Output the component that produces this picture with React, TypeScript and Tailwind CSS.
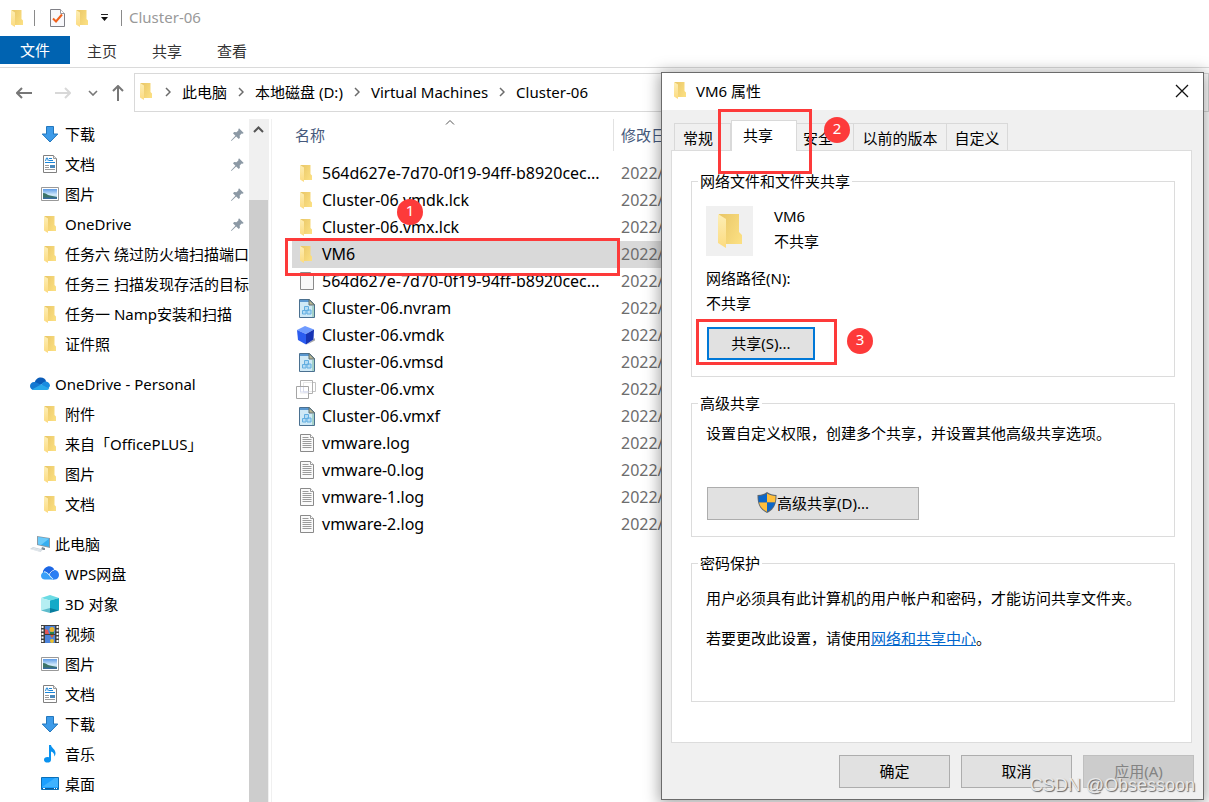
import React, { useId } from "react";

type IconProps = { className?: string };

function FolderIcon({ className = "h-[17px] w-3" }: IconProps) {
  const id = useId();
  return (
    <svg viewBox="0 0 24 34" className={className} aria-hidden="true">
      <defs>
        <linearGradient id={id + "b"} x1="0" y1="0.2" x2="1" y2="0.8">
          <stop offset="0" stopColor="#eac869" />
          <stop offset="1" stopColor="#fbdf82" />
        </linearGradient>
        <linearGradient id={id + "f"} x1="0" y1="0" x2="0" y2="1">
          <stop offset="0" stopColor="#fdeeb5" />
          <stop offset="1" stopColor="#fcdb80" />
        </linearGradient>
      </defs>
      <path d="M1 0h20v18l3 3v9H7L1 4z" fill={`url(#${id}b)`} />
      <path d="M0 0l8 5v29l-8-5z" fill={`url(#${id}f)`} />
    </svg>
  );
}

function DownloadIcon() {
  return (
    <svg viewBox="0 0 18 18" className="h-[18px] w-[18px]" aria-hidden="true">
      <path d="M5.5 1.5h7V9h4.3L9 17 1.2 9h4.3z" fill="#3d9be9" stroke="#2377bd" strokeWidth="1" />
    </svg>
  );
}

function DocumentIcon() {
  return (
    <svg viewBox="0 0 18 18" className="h-[18px] w-[18px]" aria-hidden="true">
      <path d="M2.5.5h10l3 3v14h-13z" fill="#fff" stroke="#808080" />
      <path d="M12.5.5v3h3" fill="#e8e8e8" stroke="#9a9a9a" />
      <path d="M4.5 6l1-3h1l.8 3M8 3.5h3M8 5.5h4M4 7.5h10" fill="none" stroke="#1c86d8" />
      <path d="M4 10.500h4M4 12.500h4M4 14.500h10" stroke="#9a9a9a" />
      <path d="M9 10h5v3H9z" fill="#4a89bd" />
    </svg>
  );
}

function PictureIcon() {
  const id = useId();
  return (
    <svg viewBox="0 0 18 18" className="h-[18px] w-[18px]" aria-hidden="true">
      <defs>
        <linearGradient id={id} x1="0" y1="0" x2="0" y2="1">
          <stop offset="0" stopColor="#5e9be6" />
          <stop offset="0.6" stopColor="#d6ecfb" />
          <stop offset="1" stopColor="#7fb3dc" />
        </linearGradient>
      </defs>
      <path d="M.5 2.500h17v13H.5z" fill="#fff" stroke="#999" />
      <path d="M2 4h14v10H2z" fill={`url(#${id})`} />
      <path d="M2 8c3 0 4 2 7 2.500l7 1.500v1H2z" fill="#3d7568" />
      <path d="M2 12.500h14V14H2z" fill="#386c9f" />
    </svg>
  );
}

function PinIcon() {
  return (
    <svg viewBox="0 0 13 13" className="h-[13px] w-[13px] shrink-0" aria-hidden="true">
      <path
        d="M8 .3L12.700 5l-1.200.7-.8-.2-2 2 .2 2.300-1.100 1.200-2.600-2.600L.7 12.800 0 13l.2-.8 4.200-4.500L2 5.200l1.200-1.100 2.300.2 2-2-.2-.8z"
        fill="#8c99a5"
      />
    </svg>
  );
}

function OneDriveIcon() {
  return (
    <svg viewBox="0 0 20 14" className="h-[14px] w-5" aria-hidden="true">
      <path d="M4.500 6.200C5 2.500 8 .5 10.800.5c2.500 0 4.700 1.500 5.400 4L10 8z" fill="#0a5cb8" />
      <path d="M4 13C1.500 13 0 11.200 0 9c0-2.400 2-4.200 4.500-4 1.600.1 3 1 7 3L6 13z" fill="#1479d2" />
      <path d="M11 8c1-2.200 2.800-3.700 5-3.600C18.500 4.500 20 6.500 20 9l-2 3z" fill="#1a8ce0" />
      <path d="M2 12.500l9-5 8.300 4C18.500 12.700 17.500 13 16 13H4c-.8 0-1.400-.1-2-.5z" fill="#28a8ea" />
    </svg>
  );
}

function ComputerIcon() {
  return (
    <svg viewBox="0 0 20 18" className="h-[18px] w-5" aria-hidden="true">
      <path d="M7 1l13 2v10L7 10z" fill="#8b9aa5" />
      <path d="M8 2l11 1.800v7.900L8 9.300z" fill="#35aef0" />
      <path d="M8 2l11 1.800-8 6.200-3-.7z" fill="#6ccbfa" />
      <path d="M12 12l3 1v2h-4z" fill="#7d8b96" />
      <path d="M3 12l10 2.500L10.500 17 0 14z" fill="#c9d2da" />
      <path d="M2.500 13l9 2.400M1.500 14l9 2.300" stroke="#f4f6f8" strokeWidth=".6" />
    </svg>
  );
}

function WpsCloudIcon() {
  return (
    <svg viewBox="0 0 18 18" className="h-[18px] w-[18px]" aria-hidden="true">
      <path d="M2 7.500c.4-3.500 3-6 6.300-6 2.400 0 4.300 1.300 5 3.500C16 5 18 7.200 18 10c0 2.700-1.800 4.500-4.500 4.500H11z" fill="#2d7ff3" />
      <path d="M2 7.500c.4-3.500 3-6 6.300-6C11 1.500 13 3.500 13.300 5.500L8 10z" fill="#1e67e4" />
      <path d="M4 14.500c-2.400 0-4-1.600-4-3.700C0 8.500 1.800 6.800 4 6.800c3.500 0 4.500 3.700 9.500 7.700z" fill="#3aa0f8" />
      <path d="M3 6.800c4 0 5.500 4.500 9 7.500" fill="none" stroke="#fff" strokeWidth=".9" />
      <path d="M8 10c1.200-2.700 3-4.500 5.300-5" fill="none" stroke="#fff" strokeWidth=".8" />
    </svg>
  );
}

function ObjectsIcon() {
  return (
    <svg viewBox="0 0 18 18" className="h-[18px] w-[18px]" aria-hidden="true">
      <path d="M0 3L9 0l9 3-9 2.500z" fill="#6bdbe4" />
      <path d="M0 3l9 2.500V15l-9 .5z" fill="#b5eef2" />
      <path d="M18 3L9 5.500V15l9 .5z" fill="#14aac8" />
      <path d="M0 15.500L9 13v5z" fill="#5dbccc" />
      <path d="M18 15.500L9 13v5z" fill="#087d9f" />
    </svg>
  );
}

function VideoIcon() {
  return (
    <svg viewBox="0 0 18 18" className="h-[18px] w-[18px]" aria-hidden="true">
      <path d="M0 0h18v18H0z" fill="#3f3f3f" />
      <path d="M1.500 1v17M16.500 1v17" stroke="#fff" strokeWidth="2" strokeDasharray="2 1.500" />
      <path d="M4 1h10v8H4zM4 10h10v8H4z" fill="#4c83da" />
      <path d="M4 4l3 1 1 4H4z" fill="#e35656" />
      <circle cx="11" cy="4.500" r="2.500" fill="#ecb52c" />
      <path d="M9 7h4v2H9z" fill="#2f8145" />
      <path d="M9 10l2 3 2-3z" fill="#cf5f2f" />
      <circle cx="11" cy="16" r="2" fill="#ecc02c" />
    </svg>
  );
}

function MusicIcon() {
  return (
    <svg viewBox="0 0 18 18" className="h-[18px] w-[18px]" aria-hidden="true">
      <ellipse cx="6.500" cy="14.700" rx="3.500" ry="2.800" fill="#0a92ef" />
      <path d="M8 0h2c.3 3 4.500 4 4.500 8 0 1.500-.4 2.500-1.200 3.500.2-2.500-.6-4-3.300-5V15H8z" fill="#0a92ef" />
    </svg>
  );
}

function DesktopIcon() {
  return (
    <svg viewBox="0 0 18 18" className="h-[18px] w-[18px]" aria-hidden="true">
      <path d="M.5 2.500h17v12H.5z" fill="#1a9fff" stroke="#0a6fb8" />
      <path d="M1 12L14 3h3v9z" fill="#3fb2ff" />
      <path d="M1 13.500h16" stroke="#0a5c9c" />
      <path d="M2 13.500h2M13 13.500h1M15 13.500h1" stroke="#fff" />
    </svg>
  );
}

function BlankFileIcon() {
  return (
    <svg viewBox="0 0 18 20" className="h-5 w-[18px]" aria-hidden="true">
      <path d="M3.500.500h10l3 3v14h-13z" fill="#f8f8f8" stroke="#8a8a8a" />
      <path d="M13.500.500v3h3" fill="#fff" stroke="#9a9a9a" />
    </svg>
  );
}

function LogIcon() {
  return (
    <svg viewBox="0 0 18 20" className="h-5 w-[18px]" aria-hidden="true">
      <path d="M3.500.500h10l3 3v14h-13z" fill="#fafafa" stroke="#8a8a8a" />
      <path d="M13.500.500v3h3" fill="#fff" stroke="#9a9a9a" />
      <path d="M5.500 3.500h6M5.500 5.500h9M5.500 7.500h9M5.500 9.500h9M5.500 11.500h9M5.500 13.500h9" stroke="#9b9b9b" />
    </svg>
  );
}

function VmFileIcon() {
  return (
    <svg viewBox="0 0 18 20" className="h-5 w-[18px]" aria-hidden="true">
      <path d="M2.500.500h10l5 5v13h-15z" fill="#cfe9f6" stroke="#4a7090" />
      <path d="M3 1h9v2H3z" fill="#5a97cf" />
      <path d="M15 7h2v11h-2z" fill="#a5d2c8" />
      <path d="M12 .500v5.500h5.500z" fill="#b9b694" stroke="#5d6f70" />
      <path d="M7.500 7.500h4v4h-4zM5.500 11.500h3.500v3.500H5.500zM10 11h4v4h-4z" fill="#b4dcf5" stroke="#62aee0" />
    </svg>
  );
}

function CubeIcon() {
  return (
    <svg viewBox="0 0 18 20" className="h-5 w-[18px]" aria-hidden="true">
      <path d="M10 18.500l8-4V12z" fill="#a5a5a5" />
      <path d="M0 4L8 0l9 3.500-8 4.500z" fill="#6f9bff" />
      <path d="M0 4l9 4v10.500L1 14z" fill="#2b5cf0" />
      <path d="M17 3.500L9 8v10.500l7.500-5z" fill="#1734b4" />
    </svg>
  );
}

function VmxIcon() {
  return (
    <svg viewBox="0 0 20 20" className="h-5 w-5 shrink-0" aria-hidden="true">
      <path d="M7.500 2.500h12v9h-12z" fill="#fff" stroke="#c4c4c4" />
      <path d="M4.500.500h12v13h-12z" fill="#fff" fillOpacity=".6" stroke="#b0b0b0" />
      <path d="M.5 6.500h12v12H.5z" fill="#fff" fillOpacity=".85" stroke="#a5a5a5" />
      <path d="M4.500 7v5h8M7.500 7v5h5" fill="none" stroke="#d8dcee" />
    </svg>
  );
}

function ShieldIcon() {
  return (
    <svg viewBox="0 0 20 21" className="h-[21px] w-5 shrink-0" aria-hidden="true">
      <path d="M10 0C7.500 2 4 3 .5 3 .5 11 2 17 10 21 18 17 19.500 11 19.500 3 16 3 12.500 2 10 0z" fill="#5c6670" />
      <path d="M10 1.500V10.500H2c-.4-2-.5-4-.5-6.500C4.500 4 7.500 3 10 1.500z" fill="#0c67c9" />
      <path d="M10 1.500V10.500h8c.4-2 .5-4 .5-6.500C15.500 4 12.500 3 10 1.500z" fill="#ffbf3b" />
      <path d="M2 10.500h8v9.200c-5-2.500-7.200-5.500-8-9.200z" fill="#ffbf3b" />
      <path d="M18 10.500h-8v9.200c5-2.500 7.200-5.500 8-9.200z" fill="#0c67c9" />
    </svg>
  );
}

function ChevronRight() {
  return (
    <svg viewBox="0 0 6 10" className="h-[10px] w-[6px] shrink-0" aria-hidden="true">
      <path d="M1 1l4 4-4 4" fill="none" stroke="#6b6b6b" strokeWidth="1.500" />
    </svg>
  );
}

type NavItem = { label: string; icon: React.ReactNode; pinned?: boolean };

const quickAccess: NavItem[] = [
  { label: "下载", icon: <DownloadIcon />, pinned: true },
  { label: "文档", icon: <DocumentIcon />, pinned: true },
  { label: "图片", icon: <PictureIcon />, pinned: true },
  { label: "OneDrive", icon: <FolderIcon />, pinned: true },
  { label: "任务六 绕过防火墙扫描端口", icon: <FolderIcon /> },
  { label: "任务三 扫描发现存活的目标", icon: <FolderIcon /> },
  { label: "任务一 Namp安装和扫描", icon: <FolderIcon /> },
  { label: "证件照", icon: <FolderIcon /> },
];

const oneDrive: NavItem[] = [
  { label: "附件", icon: <FolderIcon /> },
  { label: "来自「OfficePLUS」", icon: <FolderIcon /> },
  { label: "图片", icon: <FolderIcon /> },
  { label: "文档", icon: <FolderIcon /> },
];

const computer: NavItem[] = [
  { label: "WPS网盘", icon: <WpsCloudIcon /> },
  { label: "3D 对象", icon: <ObjectsIcon /> },
  { label: "视频", icon: <VideoIcon /> },
  { label: "图片", icon: <PictureIcon /> },
  { label: "文档", icon: <DocumentIcon /> },
  { label: "下载", icon: <DownloadIcon /> },
  { label: "音乐", icon: <MusicIcon /> },
  { label: "桌面", icon: <DesktopIcon /> },
];

const files: { name: string; icon: React.ReactNode; selected?: boolean }[] = [
  { name: "564d627e-7d70-0f19-94ff-b8920cec...", icon: <FolderIcon /> },
  { name: "Cluster-06.vmdk.lck", icon: <FolderIcon /> },
  { name: "Cluster-06.vmx.lck", icon: <FolderIcon /> },
  { name: "VM6", icon: <FolderIcon />, selected: true },
  { name: "564d627e-7d70-0f19-94ff-b8920cec...", icon: <BlankFileIcon /> },
  { name: "Cluster-06.nvram", icon: <VmFileIcon /> },
  { name: "Cluster-06.vmdk", icon: <CubeIcon /> },
  { name: "Cluster-06.vmsd", icon: <VmFileIcon /> },
  { name: "Cluster-06.vmx", icon: <VmxIcon /> },
  { name: "Cluster-06.vmxf", icon: <VmFileIcon /> },
  { name: "vmware.log", icon: <LogIcon /> },
  { name: "vmware-0.log", icon: <LogIcon /> },
  { name: "vmware-1.log", icon: <LogIcon /> },
  { name: "vmware-2.log", icon: <LogIcon /> },
];

function NavGroup({ title, icon, items }: { title?: string; icon?: React.ReactNode; items: NavItem[] }) {
  return (
    <div>
      {title && (
        <a href="#" className="flex h-[30px] items-center gap-[5px] pl-[30px]">
          {icon}
          <span>{title}</span>
        </a>
      )}
      <ul>
        {items.map((item) => (
          <li key={item.label}>
            <a href="#" className="flex h-[30px] items-center gap-[6px] overflow-hidden pl-[41px] pr-[5px]">
              <span className="flex w-[18px] shrink-0 justify-center">{item.icon}</span>
              <span className="grow whitespace-nowrap">{item.label}</span>
              {item.pinned && <PinIcon />}
            </a>
          </li>
        ))}
      </ul>
    </div>
  );
}

function TitleBar() {
  return (
    <div className="flex h-9 items-center pl-[11px]">
      <FolderIcon />
      <span className="ml-[11px] h-4 w-px bg-[#8a8a8a]" />
      <button aria-label="属性" className="ml-[15px]">
        <svg viewBox="0 0 15 18" className="h-[18px] w-[15px]" aria-hidden="true">
          <path d="M.5.5h10l4 4v13H.5z" fill="#f8f8fb" stroke="#7f7f86" />
          <path d="M10.500.5v4h4" fill="#fff" stroke="#9a9a9f" />
          <path d="M3 9.500l3 3L12 5.500" fill="none" stroke="#f0611d" strokeWidth="2" />
        </svg>
      </button>
      <button aria-label="新建文件夹" className="ml-[11px]">
        <FolderIcon />
      </button>
      <button aria-label="自定义快速访问工具栏" className="ml-3">
        <svg viewBox="0 0 9 8" className="h-2 w-[9px]" aria-hidden="true">
          <path d="M1 .500h7" stroke="#222" />
          <path d="M1 3h7L4.500 7z" fill="#111" />
        </svg>
      </button>
      <span className="ml-3 h-4 w-px bg-[#8a8a8a]" />
      <span className="ml-[7px] pb-[2px] text-[#999]">Cluster-06</span>
    </div>
  );
}

function AddressBar() {
  return (
    <div className="mt-[5px] flex h-[39px] items-center">
      <button aria-label="后退" className="ml-4">
        <svg viewBox="0 0 16 12" className="h-3 w-4" aria-hidden="true">
          <path d="M6 1L1 6l5 5M1 6h15" fill="none" stroke="#777" strokeWidth="2" />
        </svg>
      </button>
      <button aria-label="前进" className="ml-[23px]">
        <svg viewBox="0 0 16 12" className="h-3 w-4" aria-hidden="true">
          <path d="M10 1l5 5-5 5M15 6H0" fill="none" stroke="#d8d8d8" strokeWidth="2" />
        </svg>
      </button>
      <button aria-label="最近浏览的位置" className="ml-[17px]">
        <svg viewBox="0 0 10 6" className="h-[6px] w-[10px]" aria-hidden="true">
          <path d="M1 1l4 4 4-4" fill="none" stroke="#777" strokeWidth="1.600" />
        </svg>
      </button>
      <button aria-label="上移" className="ml-[14px]">
        <svg viewBox="0 0 12 16" className="h-4 w-3" aria-hidden="true">
          <path d="M1 6l5-5 5 5M6 1v15" fill="none" stroke="#777" strokeWidth="2" />
        </svg>
      </button>
      <nav
        aria-label="地址"
        className="ml-[10px] flex h-full grow items-center whitespace-nowrap border border-[#d9d9d9] pb-[2px] pl-[5px]"
      >
        <FolderIcon />
        <span className="ml-[13px] flex items-center gap-[11px]">
          <ChevronRight />
          <a href="#">此电脑</a>
          <ChevronRight />
          <a href="#">本地磁盘 (D:)</a>
          <ChevronRight />
          <a href="#">Virtual Machines</a>
          <ChevronRight />
          <a href="#">Cluster-06</a>
        </span>
      </nav>
    </div>
  );
}

function FileTable() {
  return (
    <div className="relative ml-5 mr-2 grow">
      <svg viewBox="0 0 10 6" className="absolute left-[153px] top-0 h-[6px] w-[10px]" aria-hidden="true">
        <path d="M1 5.500l4-4 4 4" fill="none" stroke="#555" />
      </svg>
      <table className="w-full table-fixed border-collapse text-left">
        <colgroup>
          <col className="w-[322px]" />
          <col />
        </colgroup>
        <thead>
          <tr className="h-[41px] align-top text-[#46597c]">
            <th className="p-0 font-normal">
              <span className="flex h-8 items-center border-r border-[#e2e2e2] pl-[3px]">名称</span>
            </th>
            <th className="p-0 font-normal">
              <span className="flex h-8 items-center pl-[7px]">修改日期</span>
            </th>
          </tr>
        </thead>
        <tbody>
          {files.map((file, i) => (
            <tr key={i} className={file.selected ? "h-[27px] bg-[#d9d9d9]" : "h-[27px]"}>
              <td className="p-0 text-base leading-[27px]">
                <span className="flex h-[27px] items-center gap-[7px] pl-[5px]">
                  <span className="flex w-[18px] shrink-0 justify-center">{file.icon}</span>
                  <span className="whitespace-nowrap">{file.name}</span>
                </span>
              </td>
              <td className="p-0 pl-[7px] text-base leading-[27px] text-[#6d6d6d]">2022/</td>
            </tr>
          ))}
        </tbody>
      </table>
    </div>
  );
}

const buttonStyle = "flex h-[33px] items-center justify-center border pb-[2px]";

function PropertiesDialog() {
  const tab = "h-[27px] border-t border-r border-[#d9d9d9] pt-px text-center";
  const group = "border border-[#dcdcdc] px-[14px]";
  const legend = "-ml-2 px-[2px] leading-[22px]";
  return (
    <section
      role="dialog"
      aria-label="VM6 属性"
      className="absolute left-[661px] top-[72px] flex w-[543px] flex-col border border-[#6b6b6b] bg-[#f0f0f0] leading-[22px] shadow-[0_2px_14px_2px_rgba(0,0,0,0.35)]"
    >
      <header className="flex h-[37px] items-center bg-white pb-[2px] pl-3 pr-[14px]">
        <FolderIcon />
        <h1 className="ml-[10px] grow">VM6 属性</h1>
        <button aria-label="关闭">
          <svg viewBox="0 0 14 14" className="h-[14px] w-[14px]" aria-hidden="true">
            <path d="M1 1l12 12M13 1L1 13" stroke="#111" strokeWidth="1.300" />
          </svg>
        </button>
      </header>

      <div role="tablist" className="ml-3 mt-[10px] flex items-end">
        <button role="tab" className={tab + " w-[57px] border-l pr-[9px]"}>常规</button>
        <button
          role="tab"
          aria-selected="true"
          className="relative -mb-px h-[31px] w-[66px] border border-b-0 border-[#d9d9d9] bg-white pb-[2px] pr-3 text-center"
        >
          共享
        </button>
        <button role="tab" className={tab + " w-[57px] pl-[6px] text-left"}>安全</button>
        <button role="tab" className={tab + " w-[93px]"}>以前的版本</button>
        <button role="tab" className={tab + " w-[61px]"}>自定义</button>
      </div>

      <div role="tabpanel" className="ml-[9px] mr-[11px] flex flex-col gap-[15px] border border-[#dcdcdc] bg-white pb-10 pl-[19px] pr-4 pt-[19px]">
        <fieldset className={group + " h-[207px]"}>
          <legend className={legend}>网络文件和文件夹共享</legend>
          <div className="mt-[14px] flex gap-[21px]">
            <span className="flex h-[50px] w-[47px] items-center justify-center bg-[#f0f0f0]">
              <FolderIcon className="h-9 w-6" />
            </span>
            <span className="-mt-px flex flex-col gap-[3px]">
              <span>VM6</span>
              <span>不共享</span>
            </span>
          </div>
          <p className="mt-[11px]">网络路径(N):</p>
          <p className="mt-[3px]">不共享</p>
          <button className="ml-px mt-[13px] flex h-[33px] w-[108px] items-center justify-center border-2 border-[#0078d7] bg-[#e1e1e1] pb-[2px]">
            共享(S)...
          </button>
        </fieldset>

        <fieldset className={group + " h-[145px]"}>
          <legend className={legend}>高级共享</legend>
          <p className="mt-2">设置自定义权限，创建多个共享，并设置其他高级共享选项。</p>
          <button className={buttonStyle + " ml-px mt-[43px] w-[212px] border-[#adadad] bg-[#e1e1e1]"}>
            <ShieldIcon />
            <span>高级共享(D)...</span>
          </button>
        </fieldset>

        <fieldset className={group + " h-[150px]"}>
          <legend className={legend}>密码保护</legend>
          <p className="mt-[13px] whitespace-nowrap">用户必须具有此计算机的用户帐户和密码，才能访问共享文件夹。</p>
          <p className="mt-[18px]">
            若要更改此设置，请使用
            <a href="#" className="text-[#0066cc] underline">网络和共享中心</a>。
          </p>
        </fieldset>
      </div>

      <footer className="flex justify-end gap-[11px] pb-[11px] pr-[9px] pt-3">
        <button className={buttonStyle + " w-[111px] border-[#adadad] bg-[#e1e1e1]"}>确定</button>
        <button className={buttonStyle + " w-[111px] border-[#adadad] bg-[#e1e1e1]"}>取消</button>
        <button disabled className={buttonStyle + " w-[111px] border-[#bfbfbf] bg-[#cccccc] text-[#838383]"}>
          应用(A)
        </button>
      </footer>
    </section>
  );
}

function Step({ n, className }: { n: number; className: string }) {
  return (
    <span
      className={
        "absolute flex h-[26px] w-[26px] items-center justify-center rounded-full bg-[#fd3a3a] pb-1 text-white " + className
      }
    >
      {n}
    </span>
  );
}

export default function App() {
  return (
    <div
      lang="zh-CN"
      className="relative flex h-screen flex-col overflow-hidden bg-white font-['Noto_Sans','Noto_Sans_CJK_SC',sans-serif] text-[15px] leading-[22px] text-black"
    >
      <TitleBar />
      <div className="flex h-8 border-b border-[#dadada]">
        <button className="h-7 w-[70px] bg-[#0063b1] text-white">文件</button>
        <div className="ml-[17px] flex h-[30px] items-center gap-[35px] text-[#333]">
          <button>主页</button>
          <button>共享</button>
          <button>查看</button>
        </div>
      </div>
      <AddressBar />

      <div className="mt-[7px] flex min-h-0 grow">
        <nav aria-label="导航窗格" className="flex w-[249px] shrink-0 flex-col gap-[10px] overflow-hidden">
          <NavGroup items={quickAccess} />
          <NavGroup title="OneDrive - Personal" icon={<OneDriveIcon />} items={oneDrive} />
          <NavGroup title="此电脑" icon={<ComputerIcon />} items={computer} />
        </nav>
        <div className="flex w-5 shrink-0 flex-col bg-[#f0f0f0]">
          <svg viewBox="0 0 20 22" className="h-[22px] w-5" aria-hidden="true">
            <path d="M5 13l4.500-4.500L14 13" fill="none" stroke="#555" strokeWidth="2" />
          </svg>
          <div className="mr-px mt-[59px] grow bg-[#cdcdcd]" />
        </div>
        <div className="ml-[2px] w-px shrink-0 bg-[#f0f0f0]" />
        <FileTable />
      </div>

      <PropertiesDialog />

      <span className="absolute left-[285px] top-[238px] h-[38px] w-[335px] border-[3px] border-[#fd3a3a]" />
      <span className="absolute left-[718px] top-[109px] h-[65px] w-[94px] border-[3px] border-[#fd3a3a]" />
      <span className="absolute left-[696px] top-[319px] h-[46px] w-[141px] border-[3px] border-[#fd3a3a]" />
      <Step n={1} className="left-[397px] top-[199px]" />
      <Step n={2} className="left-[824px] top-[117px]" />
      <Step n={3} className="left-[847px] top-[328px]" />

      <span className="absolute right-[14px] top-[773px] font-['Liberation_Sans',sans-serif] text-lg leading-6 text-[#e8e8e8] [text-shadow:1px_1px_1px_#666]">
        CSDN @Obsessoon
      </span>
    </div>
  );
}
